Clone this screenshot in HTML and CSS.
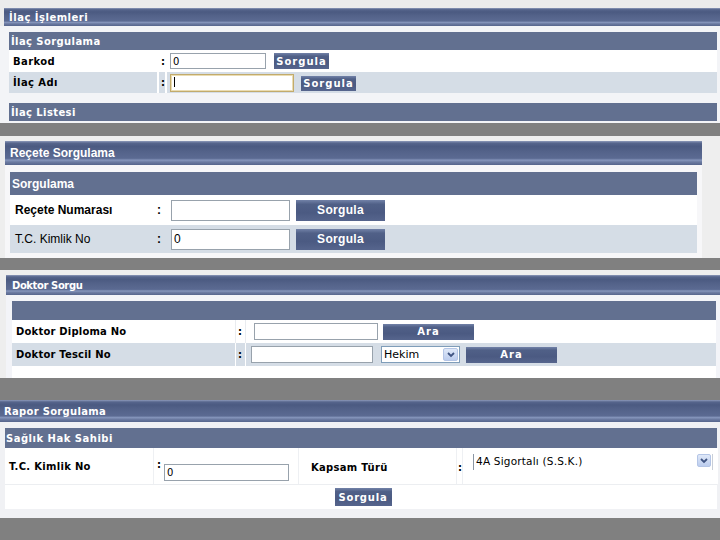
FILE: index.html
```html
<!DOCTYPE html>
<html lang="tr">
<head>
<meta charset="utf-8">
<title>İlaç İşlemleri</title>
<link rel="stylesheet" href="styles.css">
</head>
<body>

<div class="panel p1">
  <div class="bar bar1">İlaç İşlemleri</div>
  <div class="s1">
    <div class="head h1">İlaç Sorgulama</div>
    <div class="row1">
      <div class="c lbl1">Barkod</div>
      <div class="c col1">:</div>
      <div class="c fld1"><input class="in in-barkod" value="0"><button class="btn b1">Sorgula</button></div>
    </div>
    <div class="row1 alt">
      <div class="c lbl1">İlaç Adı</div>
      <div class="c col1">:</div>
      <div class="c fld1"><span class="caretwrap"><input class="in in-ilac"></span><button class="btn b1 b1b">Sorgula</button></div>
    </div>
    <div class="spacer1"></div>
    <div class="head h1">İlaç Listesi</div>
  </div>
</div>

<div class="panel p2">
  <div class="bar bar2">Reçete Sorgulama</div>
  <div class="wrap2">
    <div class="head h2">Sorgulama</div>
    <div class="row2 r2a">
      <div class="c lbl2 bold">Reçete Numarası</div>
      <div class="c col2">:</div>
      <div class="c fld2"><input class="in in2"><button class="btn b2">Sorgula</button></div>
    </div>
    <div class="row2 r2b alt2">
      <div class="c lbl2">T.C. Kimlik No</div>
      <div class="c col2">:</div>
      <div class="c fld2"><input class="in in2" value="0"><button class="btn b2">Sorgula</button></div>
    </div>
  </div>
</div>

<div class="panel p3">
  <div class="bar bar3">Doktor Sorgu</div>
  <div class="wrap3">
    <div class="s3">
      <div class="head h3"></div>
      <div class="row3">
        <div class="c lbl3">Doktor Diploma No</div>
        <div class="c col3">:</div>
        <div class="c fld3"><input class="in in3a"><button class="btn b3">Ara</button></div>
      </div>
      <div class="row3 alt3">
        <div class="c lbl3">Doktor Tescil No</div>
        <div class="c col3">:</div>
        <div class="c fld3 fld3b">
          <input class="in in3b">
          <div class="sel sel3"><span class="seltext">Hekim</span><span class="arrow"><svg width="8" height="6" viewBox="0 0 8 6"><path d="M1 1 L4 4 L7 1" stroke="#3f5482" stroke-width="1.8" fill="none"/></svg></span></div>
          <button class="btn b3 b3b">Ara</button>
        </div>
      </div>
      <div class="bottom3"></div>
    </div>
  </div>
</div>

<div class="panel p4">
  <div class="bar bar4">Rapor Sorgulama</div>
  <div class="s4">
    <div class="head h4">Sağlık Hak Sahibi</div>
    <div class="row4">
      <div class="c lbl4">T.C. Kimlik No</div>
      <div class="c4 tc4"><span class="colon4">:</span><input class="in in4" value="0"></div>
      <div class="c lbl4 kap4">Kapsam Türü</div>
      <div class="c4 col4"><span class="colon4b">:</span></div>
      <div class="c4 selcell">
        <div class="sel sel4"><span class="seltext4">4A Sigortalı (S.S.K.)</span><span class="arrow arrow4"><svg width="8" height="6" viewBox="0 0 8 6"><path d="M1 1 L4 4 L7 1" stroke="#3f5482" stroke-width="1.8" fill="none"/></svg></span></div>
      </div>
    </div>
    <div class="btnrow4"><button class="btn b4">Sorgula</button></div>
  </div>
</div>

</body>
</html>
```

FILE: styles.css
```css
html, body {
  margin: 0;
  padding: 0;
}
body {
  background: #808080;
  width: 720px;
  height: 540px;
  overflow: hidden;
  font-family: "DejaVu Sans", Verdana, sans-serif;
  font-size: 10px;
  color: #000;
}
* { box-sizing: border-box; }

.panel { overflow: hidden; }

.bar {
  color: #fff;
  font-weight: bold;
  display: flex;
  align-items: center;
  background: linear-gradient(to bottom,
    #8e9aba 0%, #56658c 9%, #4b5a81 22%, #54638a 45%,
    #5b6a92 72%, #8595bb 80%, #6b7aa1 88%, #56658c 100%);
}

.head {
  background: #627090;
  color: #fff;
  font-weight: bold;
  display: flex;
  align-items: center;
}

.c { display: flex; align-items: center; }

.in {
  border: 1px solid #98a2ac;
  background: #fff;
  font-family: "DejaVu Sans", sans-serif;
  font-size: 10px;
  padding: 0 2px;
  margin: 0;
  outline: none;
  color: #000;
}

.btn {
  border: 0;
  margin: 0;
  padding: 0;
  color: #fff;
  font-weight: bold;
  font-family: "DejaVu Sans", sans-serif;
  font-size: 10px;
  letter-spacing: 1px;
  background: linear-gradient(to bottom, #7282a8 0%, #506087 20%, #4b5a82 60%, #56658d 100%);
  cursor: pointer;
}

/* ---------- panel 1 ---------- */
.p1 {
  height: 123px;
  padding-top: 8px;
  background: linear-gradient(to bottom, #ececec 0, #ececec 26px, #f3f4f7 26px);
}
.bar1 {
  margin-left: 4px;
  height: 18px;
  padding-left: 5px;
  letter-spacing: 0.5px;
}
.s1 {
  margin: 6px 3px 0 9px;
}
.h1 {
  height: 18px;
  padding-left: 2px;
  letter-spacing: 0.4px;
}
.row1 {
  display: grid;
  grid-template-columns: 148px 6px 1fr;
  column-gap: 2px;
  height: 22px;
  background: #fff;
  font-weight: bold;
  letter-spacing: 0.4px;
}
.row1.alt { height: 21px; }
.row1.alt .c { background: #d5dde6; }
.lbl1 { padding-left: 4px; }
.col1 { padding-left: 2px; }
.fld1 { padding-left: 3px; }
.in-barkod { width: 96px; height: 16px; }
.b1 { width: 55px; height: 16px; margin-left: 8px; }
.caretwrap { position: relative; display: inline-flex; }
.caretwrap::after {
  content: "";
  position: absolute;
  left: 4px;
  top: 4px;
  width: 1px;
  height: 10px;
  background: #000;
}
.in-ilac {
  width: 124px;
  height: 18px;
  border: 1px solid #c2ab6c;
  box-shadow: inset 0 0 0 1px #eadcb2;
  margin-top: 1px;
}
.b1b { height: 15px; margin-left: 7px; margin-top: 1px; }
.spacer1 { height: 10px; }

/* ---------- panel 2 ---------- */
.p2 {
  margin-top: 13px;
  height: 122px;
  padding-top: 5px;
  background: #eeeeee;
  font-family: "Liberation Sans", Arial, sans-serif;
  font-size: 12px;
}
.bar2 {
  margin-left: 5px;
  width: 697px;
  height: 24px;
  padding-left: 5px;
}
.wrap2 {
  margin-left: 5px;
  width: 697px;
  height: 93px;
  padding: 7px 5px 0 5px;
  background: #f7f7f9;
}
.h2 { height: 23px; padding-left: 2px; }
.row2 {
  display: grid;
  grid-template-columns: 140px 16px 1fr;
  background: #fff;
}
.r2a { height: 30px; }
.r2b { height: 28px; }
.alt2 { background: #d5dde6; }
.lbl2 { padding-left: 5px; }
.bold { font-weight: bold; }
.col2 { padding-left: 7px; font-weight: bold; }
.fld2 { padding-left: 5px; }
.in2 {
  width: 119px;
  height: 21px;
  font-family: "Liberation Sans", Arial, sans-serif;
  font-size: 12px;
}
.b2 {
  width: 89px;
  height: 21px;
  margin-left: 6px;
  font-family: "Liberation Sans", Arial, sans-serif;
  font-size: 12px;
  letter-spacing: 0.3px;
}

/* ---------- panel 3 ---------- */
.p3 {
  margin-top: 12px;
  height: 108px;
  padding-top: 5px;
  background: #eeeeee;
}
.bar3 {
  margin-left: 6px;
  height: 20px;
  padding-left: 6px;
  letter-spacing: -0.4px;
}
.wrap3 {
  margin-left: 6px;
  height: 83px;
  padding: 6px 4px 0 6px;
  background: #f3f4f8;
}
.h3 { height: 19px; }
.row3 {
  display: grid;
  grid-template-columns: 223px 9px 1fr;
  column-gap: 1px;
  height: 23px;
  background: #e9ecf0;
  font-weight: bold;
  letter-spacing: 0.2px;
}
.row3 .c { background: #fff; }
.row3.alt3 { background: #fff; }
.row3.alt3 .c { background: #d5dde6; }
.lbl3 { padding-left: 4px; }
.col3 { padding-left: 2px; }
.fld3 { padding-left: 8px; }
.fld3b { padding-left: 5px; }
.in3a { width: 124px; height: 17px; }
.in3b { width: 122px; height: 17px; }
.b3 { width: 91px; height: 16px; margin-left: 5px; }
.b3b { margin-left: 6px; }
.bottom3 { height: 12px; background: #fff; }

.sel {
  display: flex;
  align-items: center;
  background: #fff;
  font-family: "DejaVu Sans", sans-serif;
  font-weight: normal;
  letter-spacing: 0;
}
.sel3 {
  width: 79px;
  height: 17px;
  margin-left: 8px;
  border: 1px solid #7f9db9;
  padding-left: 2px;
  font-size: 11px;
}
.seltext { flex: 1; }
.arrow {
  width: 15px;
  height: 13px;
  margin-right: 1px;
  display: flex;
  align-items: center;
  justify-content: center;
  background: linear-gradient(to bottom, #dfe8f8, #bccdee);
  border: 1px solid #b4c5e6;
  border-radius: 2px;
}

/* ---------- panel 4 ---------- */
.p4 {
  margin-top: 22px;
  height: 118px;
  background: #f0f1f4;
}
.bar4 {
  height: 22px;
  padding-left: 4px;
  letter-spacing: 0.3px;
}
.s4 {
  margin: 6px 3px 0 5px;
  background: #fff;
}
.h4 { height: 20px; padding-left: 1px; letter-spacing: 0.5px; }
.row4 {
  display: grid;
  grid-template-columns: 148px 144px 157px 5px 1fr;
  column-gap: 1px;
  height: 36px;
  background: #eef0f3;
  font-weight: bold;
  letter-spacing: 0.3px;
}
.row4 > div { background: #fff; }
.lbl4 { padding-left: 4px; }
.kap4 { padding-left: 12px; padding-top: 2px; }
.c4 { display: flex; align-items: flex-start; }
.tc4 { padding: 11px 0 0 3px; }
.colon4 { line-height: 12px; width: 7px; }
.in4 { width: 125px; height: 17px; margin-top: 5px; }
.col4 { padding-top: 14px; padding-left: 1px; }
.colon4b { line-height: 12px; }
.selcell { padding: 6px 5px 0 10px; }
.sel4 {
  width: 240px;
  height: 16px;
  border-left: 1px solid #8a96a4;
  border-right: 1px solid #c9cfd8;
  padding-left: 2px;
  font-size: 10.5px;
  letter-spacing: 0.2px;
  align-items: flex-start;
}
.seltext4 { flex: 1; line-height: 14px; }
.arrow4 { width: 14px; height: 13px; }
.btnrow4 {
  height: 25px;
  border-top: 1px solid #eceef1;
  display: flex;
  justify-content: center;
  padding: 3px 0 0 4px;
}
.b4 { width: 57px; height: 18px; letter-spacing: 0.8px; }
```
